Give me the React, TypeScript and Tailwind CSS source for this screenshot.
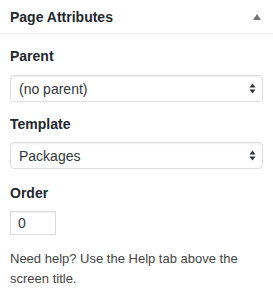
import React from "react";

function Arrows() {
  return (
    <svg width="7" height="11" viewBox="0 0 7 11" className="shrink-0">
      <path d="M3.5 0.5 L6.5 4.5 L0.5 4.5 Z" fill="#32373c" />
      <path d="M0.5 6.5 L6.5 6.5 L3.5 10.5 Z" fill="#32373c" />
    </svg>
  );
}

function FakeSelect({ value }: { value: string }) {
  return (
    <div className="flex h-[27px] w-full items-center justify-between rounded-[4px] border border-[#dddddd] bg-white pl-[8px] pr-[6px] shadow-[inset_0_1px_2px_rgba(0,0,0,0.07)]">
      <span className="text-[14px] leading-none text-[#32373c]">{value}</span>
      <Arrows />
    </div>
  );
}

export default function App() {
  return (
    <div
      className="h-[301px] w-[273px] bg-white text-[#444444]"
      style={{ fontFamily: '"Liberation Sans", Arial, sans-serif' }}
    >
      <div className="flex h-[34px] items-center justify-between border-b border-[#eeeeee] pl-[10px] pr-[12px]">
        <h2 className="text-[14px] font-bold leading-[20px] text-[#23282d]">Page Attributes</h2>
        <svg width="8" height="6" viewBox="0 0 8 6">
          <path d="M4 0 L8 6 L0 6 Z" fill="#72777c" />
        </svg>
      </div>
      <div className="px-[10px]">
        <p className="mt-[12px] mb-[9px] text-[14px] font-semibold leading-[20px] text-[#23282d]">Parent</p>
        <FakeSelect value="(no parent)" />
        <p className="mt-[12px] mb-[8px] text-[14px] font-semibold leading-[20px] text-[#23282d]">Template</p>
        <FakeSelect value="Packages" />
        <p className="mt-[14px] mb-[8px] text-[14px] font-semibold leading-[20px] text-[#23282d]">Order</p>
        <div className="flex h-[24px] w-[46px] items-center border border-[#dddddd] bg-white pl-[7px] shadow-[inset_0_1px_2px_rgba(0,0,0,0.07)]">
          <span className="text-[14px] leading-none text-[#32373c]">0</span>
        </div>
        <p className="mt-[14px] text-[13px] leading-[20px] text-[#444444]">
          Need help? Use the Help tab above the screen title.
        </p>
      </div>
    </div>
  );
}
